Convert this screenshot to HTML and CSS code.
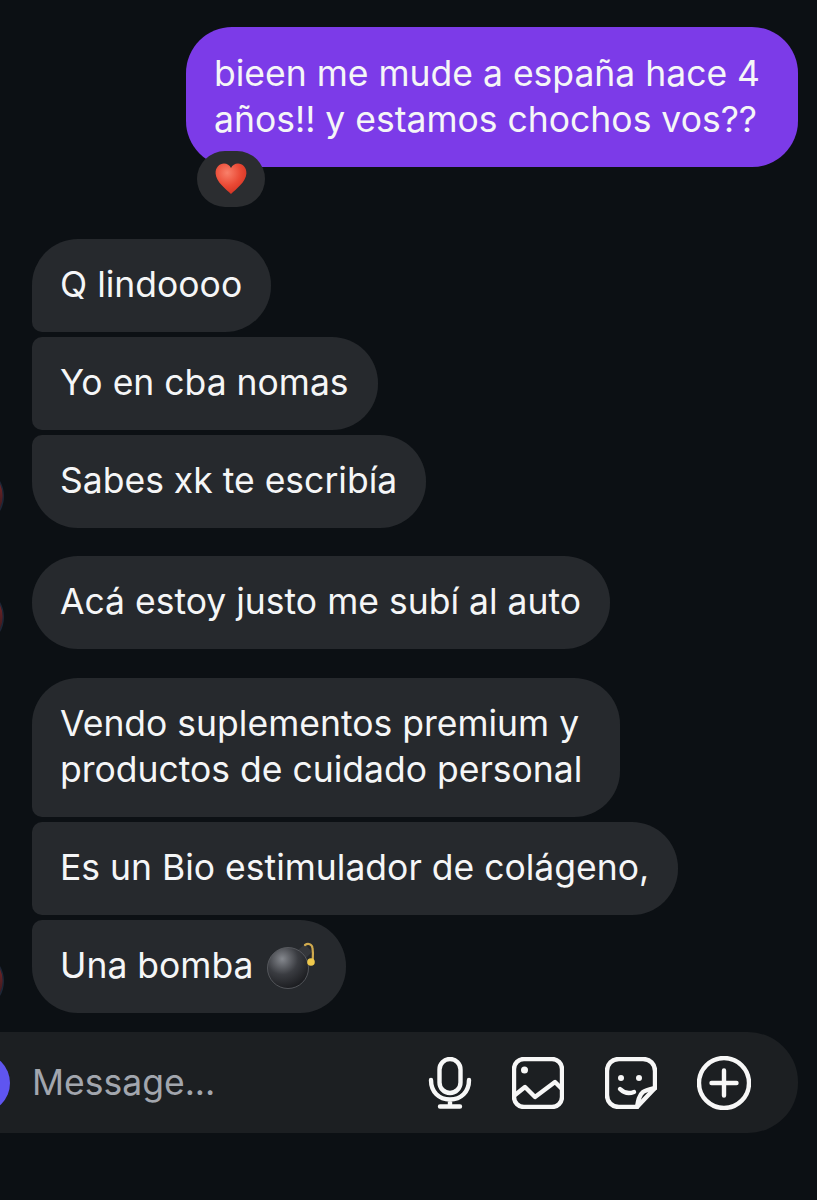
FILE: index.html
```html
<!DOCTYPE html>
<html lang="es">
<head>
<meta charset="utf-8">
<title>Chat</title>
<link rel="stylesheet" href="styles.css">
</head>
<body>
<svg class="defs" width="0" height="0" aria-hidden="true">
  <defs>
    <radialGradient id="heartFill" cx="0.38" cy="0.3" r="0.85">
      <stop offset="0" stop-color="#f9806a"/>
      <stop offset="0.5" stop-color="#ea4a35"/>
      <stop offset="1" stop-color="#c92a1c"/>
    </radialGradient>
    <radialGradient id="bombFill" cx="0.36" cy="0.28" r="0.85">
      <stop offset="0" stop-color="#85888e"/>
      <stop offset="0.45" stop-color="#3a3c41"/>
      <stop offset="1" stop-color="#121316"/>
    </radialGradient>
    <linearGradient id="avatarFill" x1="0" y1="0" x2="0" y2="1">
      <stop offset="0" stop-color="#14171d"/>
      <stop offset="0.3" stop-color="#6e2426"/>
      <stop offset="0.6" stop-color="#4a1c20"/>
      <stop offset="1" stop-color="#141a24"/>
    </linearGradient>
  </defs>
</svg>
<main class="chat">
  <section class="outgoing">
    <div class="bubble-out">bieen me mude a españa hace 4 años!! y estamos chochos vos??</div>
    <div class="reaction">
      <svg class="heart" viewBox="0 0 32 32"><path fill="url(#heartFill)" d="M16 31C11 26 1 19 .6 10.500.3 4.500 4.500.6 9 .6c3 0 5.600 1.700 7 4.400C17.400 2.300 20 .6 23 .6c4.500 0 8.700 3.900 8.400 9.900C31 19 21 26 16 31Z"/></svg>
    </div>
  </section>

  <section class="group first-group">
    <div class="bubble top">Q lindoooo</div>
    <div class="bubble mid">Yo en cba nomas</div>
    <div class="bubble end">Sabes xk te escribía</div>
    <svg class="avatar" viewBox="0 0 60 60"><circle cx="30" cy="30" r="29.300" fill="url(#avatarFill)" stroke="#1d2636" stroke-width="1.400"/></svg>
  </section>

  <section class="group">
    <div class="bubble solo">Acá estoy justo me subí al auto</div>
    <svg class="avatar" viewBox="0 0 60 60"><circle cx="30" cy="30" r="29.300" fill="url(#avatarFill)" stroke="#1d2636" stroke-width="1.400"/></svg>
  </section>

  <section class="group third-group">
    <div class="bubble top wrap">Vendo suplementos premium y<br>productos de cuidado personal</div>
    <div class="bubble mid">Es un Bio estimulador de colágeno,</div>
    <div class="bubble end">Una bomba<svg class="bomb" viewBox="0 0 50 48">
      <path d="M31 8l7-6 7 8-7 7Z" fill="#35373b"/>
      <circle cx="21" cy="26" r="20.500" fill="url(#bombFill)" stroke="#5e6166" stroke-width=".8"/>
      <path d="M38 3c3-2 7-1 7.500 3 .5 3 .5 7 .3 11" fill="none" stroke="#cfa94e" stroke-width="2.200" stroke-linecap="round"/>
      <circle cx="44" cy="20" r="3.800" fill="#efc94c"/>
    </svg></div>
    <svg class="avatar" viewBox="0 0 60 60"><circle cx="30" cy="30" r="29.300" fill="url(#avatarFill)" stroke="#1d2636" stroke-width="1.400"/></svg>
  </section>

  <footer class="composer">
    <span class="camera"></span>
    <span class="placeholder">Message...</span>
    <div class="tools">
      <svg class="tool mic" viewBox="0 0 52 52"><rect x="15.500" y="2" width="21" height="34" rx="10.500"/><path d="M7 23c0 12 8 19.500 19 19.500S45 35 45 23M26 43v6M16 49.500h20"/></svg>
      <svg class="tool" viewBox="0 0 52 52"><rect x="2" y="2" width="48" height="48" rx="10"/><path d="M3 38l10-8 10 10 20-15 7 7"/><circle class="dot" cx="12.500" cy="13" r="3.500"/></svg>
      <svg class="tool" viewBox="0 0 52 52"><path d="M32 50H14C7 50 2 45 2 38V14C2 7 7 2 14 2h24c7 0 12 5 12 12v17Z"/><path d="M32 50c1-6 2-12 6-15 3-2 8-3 12-4"/><path d="M15 32c4 4 9 5 14 3"/><circle class="dot" cx="16" cy="21" r="3"/><circle class="dot" cx="34" cy="21" r="3"/></svg>
      <svg class="tool plus" viewBox="0 0 54 54"><circle cx="27" cy="27" r="25"/><path d="M27 14.500v25M14.500 27h25"/></svg>
    </div>
  </footer>
</main>
</body>
</html>
```
FILE: styles.css
```css
* {
  box-sizing: border-box;
}

html,
body {
  margin: 0;
  height: 100%;
}

body {
  background: #0c1014;
  color: #f5f6f7;
  font-family: Inter, "Liberation Sans", sans-serif;
  font-size: 35.5px;
  line-height: 46px;
  overflow: hidden;
}

.defs {
  position: absolute;
}

.chat {
  display: flex;
  flex-direction: column;
  width: 817px;
  height: 1200px;
  padding-top: 27px;
  overflow: hidden;
}

.outgoing {
  position: relative;
  align-self: flex-end;
  width: 612px;
  margin-right: 19px;
}

.bubble-out {
  height: 140px;
  padding: 24px 28px 0;
  border-radius: 46px;
  background: #7c3be8;
}

.reaction {
  position: absolute;
  left: 11px;
  top: 124px;
  display: flex;
  align-items: center;
  justify-content: center;
  width: 68px;
  height: 56px;
  border-radius: 28px;
  background: #2b2d30;
}

.heart {
  width: 32px;
  height: 32px;
}

.group {
  position: relative;
  display: flex;
  flex-direction: column;
  align-items: flex-start;
  gap: 5px;
  margin-top: 28px;
  padding-left: 32px;
}

.first-group {
  margin-top: 72px;
}

.third-group {
  margin-top: 29px;
}

.bubble {
  height: 93px;
  padding: 23px 29px 24px 28px;
  background: #26292d;
  border-radius: 46px;
  white-space: nowrap;
}

.top {
  border-bottom-left-radius: 10px;
}

.mid {
  border-top-left-radius: 10px;
  border-bottom-left-radius: 10px;
}

.end {
  border-top-left-radius: 10px;
}

.wrap {
  height: 139px;
  padding-right: 38px;
}

.bomb {
  display: inline-block;
  width: 50px;
  height: 48px;
  margin: -10px 0 -10px 14px;
  vertical-align: -2px;
}

.avatar {
  position: absolute;
  left: -56px;
  bottom: 2px;
  width: 60px;
  height: 60px;
}

.composer {
  position: relative;
  display: flex;
  align-items: center;
  width: 798px;
  height: 101px;
  margin-top: 19px;
  padding: 0 47px 0 32px;
  border-radius: 0 50px 50px 0;
  background: #1c1f22;
}

.camera {
  position: absolute;
  left: -50px;
  top: 21px;
  width: 60px;
  height: 60px;
  border-radius: 50%;
  background: #5f55f0;
}

.placeholder {
  flex: 1;
  color: #a2a6ae;
}

.tools {
  display: flex;
  align-items: center;
  gap: 41px;
}

.tool {
  width: 52px;
  height: 52px;
  fill: none;
  stroke: #f7f7f7;
  stroke-width: 4.400;
  stroke-linecap: round;
  stroke-linejoin: round;
}

.tool .dot {
  fill: #f7f7f7;
  stroke: none;
}

.mic {
  margin-right: -5px;
}

.plus {
  width: 54px;
  height: 54px;
  margin-left: -1px;
}
```
